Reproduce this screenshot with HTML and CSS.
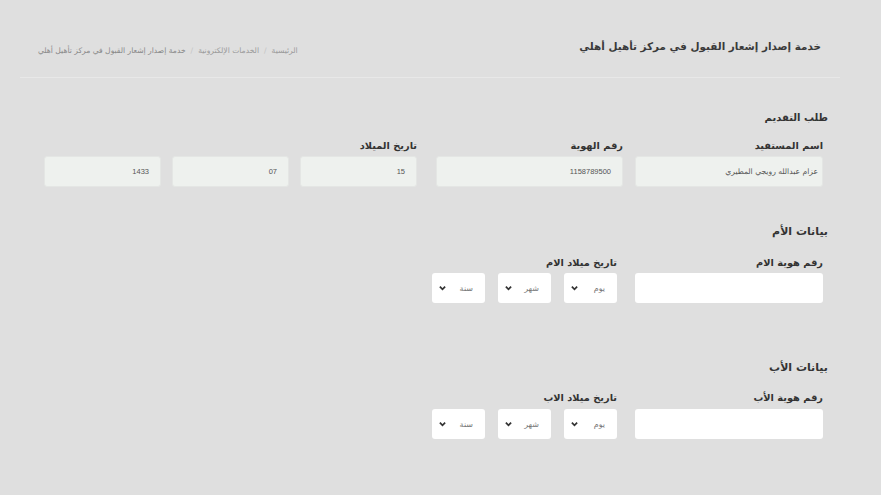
FILE: index.html
```html
<!DOCTYPE html>
<html lang="ar" dir="rtl">
<head>
<meta charset="utf-8">
<title>خدمة إصدار إشعار القبول في مركز تأهيل أهلي</title>
<link rel="stylesheet" href="styles.css">
</head>
<body>
<div class="wrap">
  <header class="head">
    <h1 class="title">خدمة إصدار إشعار القبول في مركز تأهيل أهلي</h1>
    <nav class="crumbs">
      <span>الرئيسية</span><span class="sep">/</span><span>الخدمات الإلكترونية</span><span class="sep">/</span><span class="cur">خدمة إصدار إشعار القبول في مركز تأهيل أهلي</span>
    </nav>
  </header>

  <section class="sec sec-apply">
    <h2 class="sec-title small">طلب التقديم</h2>
    <div class="row">
      <div class="field f-name">
        <label class="lbl">اسم المستفيد</label>
        <div class="box ro">عزام عبدالله رويجي المطيري</div>
      </div>
      <div class="field f-id">
        <label class="lbl">رقم الهوية</label>
        <div class="box ro num">1158789500</div>
      </div>
      <div class="field f-date">
        <label class="lbl">تاريخ الميلاد</label>
        <div class="trio">
          <div class="box ro num">15</div>
          <div class="box ro num">07</div>
          <div class="box ro num">1433</div>
        </div>
      </div>
    </div>
  </section>

  <section class="sec sec-mother">
    <h2 class="sec-title">بيانات الأم</h2>
    <div class="row">
      <div class="field f-name">
        <label class="lbl">رقم هوية الام</label>
        <div class="box white"></div>
      </div>
      <div class="field f-sel">
        <label class="lbl">تاريخ ميلاد الام</label>
        <div class="sels">
          <div class="sel"><span>يوم</span><svg viewBox="0 0 8 6" class="chev"><polyline points="1,1.5 4,4.5 7,1.5"/></svg></div>
          <div class="sel"><span>شهر</span><svg viewBox="0 0 8 6" class="chev"><polyline points="1,1.5 4,4.5 7,1.5"/></svg></div>
          <div class="sel"><span>سنة</span><svg viewBox="0 0 8 6" class="chev"><polyline points="1,1.5 4,4.5 7,1.5"/></svg></div>
        </div>
      </div>
    </div>
  </section>

  <section class="sec sec-father">
    <h2 class="sec-title">بيانات الأب</h2>
    <div class="row">
      <div class="field f-name">
        <label class="lbl">رقم هوية الأب</label>
        <div class="box white"></div>
      </div>
      <div class="field f-sel">
        <label class="lbl">تاريخ ميلاد الاب</label>
        <div class="sels">
          <div class="sel"><span>يوم</span><svg viewBox="0 0 8 6" class="chev"><polyline points="1,1.5 4,4.5 7,1.5"/></svg></div>
          <div class="sel"><span>شهر</span><svg viewBox="0 0 8 6" class="chev"><polyline points="1,1.5 4,4.5 7,1.5"/></svg></div>
          <div class="sel"><span>سنة</span><svg viewBox="0 0 8 6" class="chev"><polyline points="1,1.5 4,4.5 7,1.5"/></svg></div>
        </div>
      </div>
    </div>
  </section>
</div>
</body>
</html>
```

FILE: styles.css
```css
* { box-sizing: border-box; }
html, body { margin: 0; padding: 0; }
body {
  background: #dfdfdf;
  font-family: "DejaVu Sans", "Noto Sans", sans-serif;
  color: #333;
  direction: rtl;
}
.wrap {
  width: 820px;
  margin: 0 41px 0 20px;
  height: 495px;
}
.head {
  display: flex;
  justify-content: space-between;
  align-items: flex-start;
  padding: 36px 19px 19px 18px;
  border-bottom: 1px solid #e8e8e8;
}
.title {
  margin: 0;
  font-size: 10.4px;
  line-height: 20px;
  font-weight: bold;
  color: #3a3a3a;
}
.crumbs {
  margin-top: 8px;
  font-size: 7.6px;
  line-height: 14px;
  color: #9a9a9a;
}
.crumbs .sep { margin: 0 5px; color: #c4c4c4; }
.crumbs .cur { color: #888; }

.sec { padding-right: 12px; }
.sec-title {
  margin: 0;
  font-size: 11px;
  line-height: 20px;
  font-weight: bold;
  color: #333;
}
.sec-title.small { font-size: 10px; line-height: 18px; }
.sec-apply { margin-top: 31px; }
.sec-mother { margin-top: 35px; }
.sec-father { margin-top: 55px; }

.row {
  display: flex;
  align-items: flex-start;
  padding-right: 5px;
  margin-top: 11px;
}
.sec-mother .row { margin-top: 13px; }
.sec-father .row { margin-top: 12px; }

.field { display: flex; flex-direction: column; }
.lbl {
  display: block;
  font-size: 9.8px;
  line-height: 16px;
  font-weight: bold;
  color: #333;
  margin-bottom: 2px;
}
.sec-father .lbl { margin-bottom: 3px; }
.f-name { width: 188px; margin-left: 12px; }
.f-id { width: 187px; margin-left: 19px; }
.f-date { width: 374px; }
.f-sel { margin-right: 6px; }

.trio { display: flex; gap: 11px; }
.trio .box { width: 117px; }

.box {
  height: 31px;
  border-radius: 3px;
  font-size: 7.6px;
  line-height: 29px;
  padding: 0 4px 0 10px;
  color: #555;
  text-align: right;
}
.box.ro {
  background: #eef1ee;
  border: 1px solid #e4e6e4;
}
.box.num { font-family: "Liberation Sans", sans-serif; font-size: 7.5px; padding-right: 11px; }
.box.white {
  background: #fff;
  height: 30px;
}
.sels { display: flex; gap: 13px; }
.sel {
  width: 53px;
  height: 30px;
  background: #fff;
  border-radius: 3px;
  display: flex;
  align-items: center;
  justify-content: space-between;
  padding: 0 12px 0 7px;
  font-size: 8px;
  color: #777;
}
.chev {
  width: 7px;
  height: 6px;
  fill: none;
  stroke: #333;
  stroke-width: 2;
}
```
